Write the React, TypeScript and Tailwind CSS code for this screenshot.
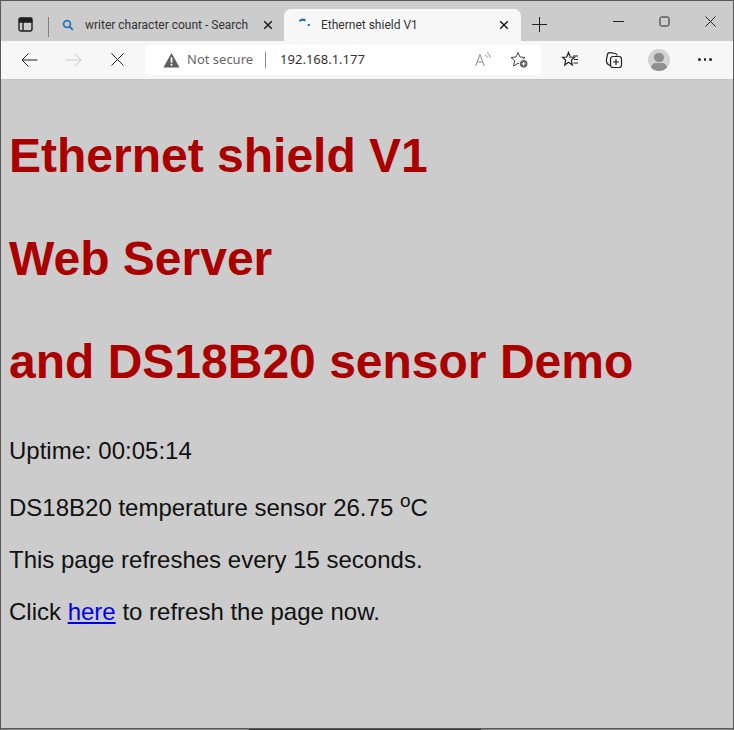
import React from 'react'

const stroke = { fill: 'none', stroke: 'currentColor', strokeWidth: 1 }

function CloseSmall() {
  return (
    <svg width="10" height="10" viewBox="0 0 10 10" fill="none" stroke="#1c1c1c" strokeWidth="1.5" className="shrink-0">
      <path d="M1.2 1.2l7.6 7.6M8.8 1.2l-7.6 7.6" />
    </svg>
  )
}

function TabBar() {
  return (
    <div className="flex h-[40px] items-end bg-[#cccccc] font-['Roboto',sans-serif]">
      <div className="flex h-[32px] w-[47px] shrink-0 items-center pb-[1px] pl-[17px]">
        <svg width="15" height="15" viewBox="0 0 15 15" className="text-[#1f1f1f]" fill="none" stroke="currentColor" strokeWidth="1.4">
          <rect x="1" y="1" width="13" height="13" rx="2" />
          <path d="M5 5v9" />
          <path d="M1.5 1.5h12V5h-12z" fill="currentColor" />
        </svg>
      </div>
      <div className="mb-[4px] h-[20px] w-px shrink-0 bg-[#808080]" />
      <div className="flex h-[32px] w-[235px] shrink-0 items-center pl-[13px] text-[12px] text-[#333333]">
        <svg width="12" height="12" viewBox="0 0 12 12" className="shrink-0" fill="none" stroke="#2a74b5" strokeWidth="1.8">
          <circle cx="5" cy="5" r="3.4" />
          <path d="M7.4 7.4 10.8 10.8" />
        </svg>
        <span className="ml-[11px] w-[178px] whitespace-nowrap">writer character count - Search</span>
        <CloseSmall />
      </div>
      <div className="flex h-[32px] w-[237px] shrink-0 items-center rounded-t-[7px] bg-[#f7f7f7] pl-[14px] text-[12px] text-[#333333]">
        <svg width="16" height="16" viewBox="0 0 16 16" className="shrink-0" fill="none" strokeWidth="2">
          <path d="M1.5 4.2C3 2.6 5.6 2.4 7.4 3.6" stroke="#1f6cae" />
          <path d="M10.8 7v2" stroke="#1f6cae" />
        </svg>
        <span className="ml-[7px] w-[178px] whitespace-nowrap">Ethernet shield V1</span>
        <CloseSmall />
      </div>
      <div className="flex h-[32px] w-[36px] shrink-0 items-center justify-center pb-[1px]">
        <svg width="15" height="15" viewBox="0 0 15 15" className="text-[#222222]" {...stroke}>
          <path d="M7.5 0v15M0 7.5h15" />
        </svg>
      </div>
      <div className="flex-1" />
      <div className="flex h-[40px] items-start pt-[15px] text-[#222222]">
        <svg width="11" height="11" viewBox="0 0 11 11" className="mr-[35px]" {...stroke}>
          <path d="M0 5.5h11" />
        </svg>
        <svg width="11" height="11" viewBox="0 0 11 11" className="mr-[35px]" {...stroke}>
          <rect x="1" y="1" width="9" height="9" rx="1.5" />
        </svg>
        <svg width="11" height="11" viewBox="0 0 11 11" className="mr-[17px]" {...stroke}>
          <path d="M.5.5l10 10M10.5.5l-10 10" />
        </svg>
      </div>
    </div>
  )
}

function Toolbar() {
  return (
    <div className="flex h-[38px] items-center bg-[#f7f7f7] pb-[1px]">
      <div className="flex w-[144px] shrink-0 items-center pl-[20px] text-[#222222]">
        <svg width="17" height="14" viewBox="0 0 17 14" {...stroke}>
          <path d="M16.5 7H1M7.5.5 1 7l6.5 6.5" />
        </svg>
        <svg width="17" height="14" viewBox="0 0 17 14" className="ml-[27px] text-[#c9c9c9]" {...stroke}>
          <path d="M.5 7H16M9.5.5 16 7l-6.5 6.5" />
        </svg>
        <svg width="13" height="13" viewBox="0 0 13 13" className="ml-[29px]" {...stroke}>
          <path d="M.5.5l12 12M12.5.5l-12 12" />
        </svg>
      </div>
      <div className="flex h-[30px] w-[396px] shrink-0 items-center rounded-[4px] bg-white pl-[18px] font-['Noto_Sans',sans-serif] text-[13px]">
        <svg width="17" height="16" viewBox="0 0 17 16" className="shrink-0">
          <path d="M8.5 1 16.6 15.5H.4z" fill="#5f5f5f" />
          <rect x="7.6" y="5.5" width="1.8" height="5.2" fill="#ffffff" />
          <rect x="7.6" y="11.8" width="1.8" height="1.8" fill="#ffffff" />
        </svg>
        <span className="ml-[7px] text-[#666666]">Not secure</span>
        <span className="ml-[12px] h-[16px] w-px bg-[#8a8a8a]" />
        <span className="ml-[14px] text-[#333333]">192.168.1.177</span>
        <div className="flex-1" />
        <svg width="16" height="15" viewBox="0 0 16 15" className="text-[#8a8a8a]" fill="none" stroke="currentColor" strokeWidth="1">
          <path d="M.7 14 5 2.5 9.3 14M2.2 10h5.6" />
          <path d="M10 2.6c1.2.6 2 1.6 2 3M12 .6c1.8 1 3 2.6 3 5" />
        </svg>
        <svg width="19" height="18" viewBox="0 0 19 18" className="ml-[19px] mr-[12px] text-[#444444]" fill="none" stroke="currentColor" strokeWidth="1">
          <path d="M8 1.5 10 6l5 .5-3.7 3.2L12.3 15 8 12.3 3.6 15l1.1-5.3L1 6.5 6 6z" />
          <circle cx="13.7" cy="12.8" r="4.3" fill="#5f5f5f" stroke="#ffffff" />
          <path d="M11.7 12.8h4M13.7 10.8v4" stroke="#ffffff" />
        </svg>
      </div>
      <div className="flex flex-1 items-center text-[#222222]">
        <svg width="18" height="17" viewBox="0 0 18 17" className="ml-[20px]" fill="none" stroke="currentColor" strokeWidth="1.2">
          <path d="M7.5 1.5 9.3 6l4.2.3-3.2 2.9 1 4.7-3.8-2.6L3.7 14l1-4.8L1.5 6.3 5.7 6z" />
          <path d="M12 5h5M13 8.5h4M12.5 12H17" />
        </svg>
        <svg width="18" height="18" viewBox="0 0 18 18" className="ml-[26px]" fill="none" stroke="currentColor" strokeWidth="1.2">
          <path d="M5 14.5C2.5 13.5 1 11 1.5 8L2.5 3.5C2.8 2 4 1.3 5.5 1.6L10 2.5c1.2.3 2 1 2.4 2" />
          <rect x="5.5" y="5.5" width="11" height="11" rx="2.5" />
          <path d="M11 8v6M8 11h6" />
        </svg>
        <div className="relative ml-[25px] h-[22px] w-[22px] overflow-hidden rounded-full bg-[#d2d2d2]">
          <div className="absolute left-[6px] top-[4px] h-[9px] w-[10px] rounded-full bg-[#8e8e8e]" />
          <div className="absolute left-[3px] top-[14px] h-[10px] w-[16px] rounded-full bg-[#8e8e8e]" />
        </div>
        <div className="ml-[28px] flex gap-[3px]">
          <span className="h-[2.5px] w-[2.5px] rounded-full bg-[#222222]" />
          <span className="h-[2.5px] w-[2.5px] rounded-full bg-[#222222]" />
          <span className="h-[2.5px] w-[2.5px] rounded-full bg-[#222222]" />
        </div>
      </div>
    </div>
  )
}

export default function App() {
  return (
    <div className="flex h-[730px] w-[734px] flex-col overflow-hidden border border-b-0 border-[#5a5a5a] bg-[#cccccc] font-['Liberation_Sans',Arial,sans-serif]">
      <TabBar />
      <Toolbar />
      <div className="h-px bg-[#c4c4c4]" />
      <main className="flex-1 pl-[8px] pt-[48px] text-[24px] leading-[27px] text-[#111111]">
        <h1 className="text-[48px] font-bold leading-[55px] text-[#aa0000]">Ethernet shield V1</h1>
        <h1 className="mt-[48px] text-[48px] font-bold leading-[55px] text-[#aa0000]">Web Server</h1>
        <h1 className="mt-[48px] text-[48px] font-bold leading-[55px] text-[#aa0000]">and DS18B20 sensor Demo</h1>
        <p className="mt-[48px]">Uptime: 00:05:14</p>
        <p className="mt-[30px]">
          DS18B20 temperature sensor 26.75 <sup className="text-[19px] leading-[0]">o</sup>C
        </p>
        <p className="mt-[25px]">This page refreshes every 15 seconds.</p>
        <p className="mt-[25px]">
          Click <a href="#" className="text-[#0000ee] underline">here</a> to refresh the page now.
        </p>
      </main>
      <div className="h-px bg-[#5a5a5a]" />
      <div className="h-px bg-[#8a8a8a] pl-[248px]">
        <div className="h-px w-[232px] bg-[#333333]" />
      </div>
    </div>
  )
}
